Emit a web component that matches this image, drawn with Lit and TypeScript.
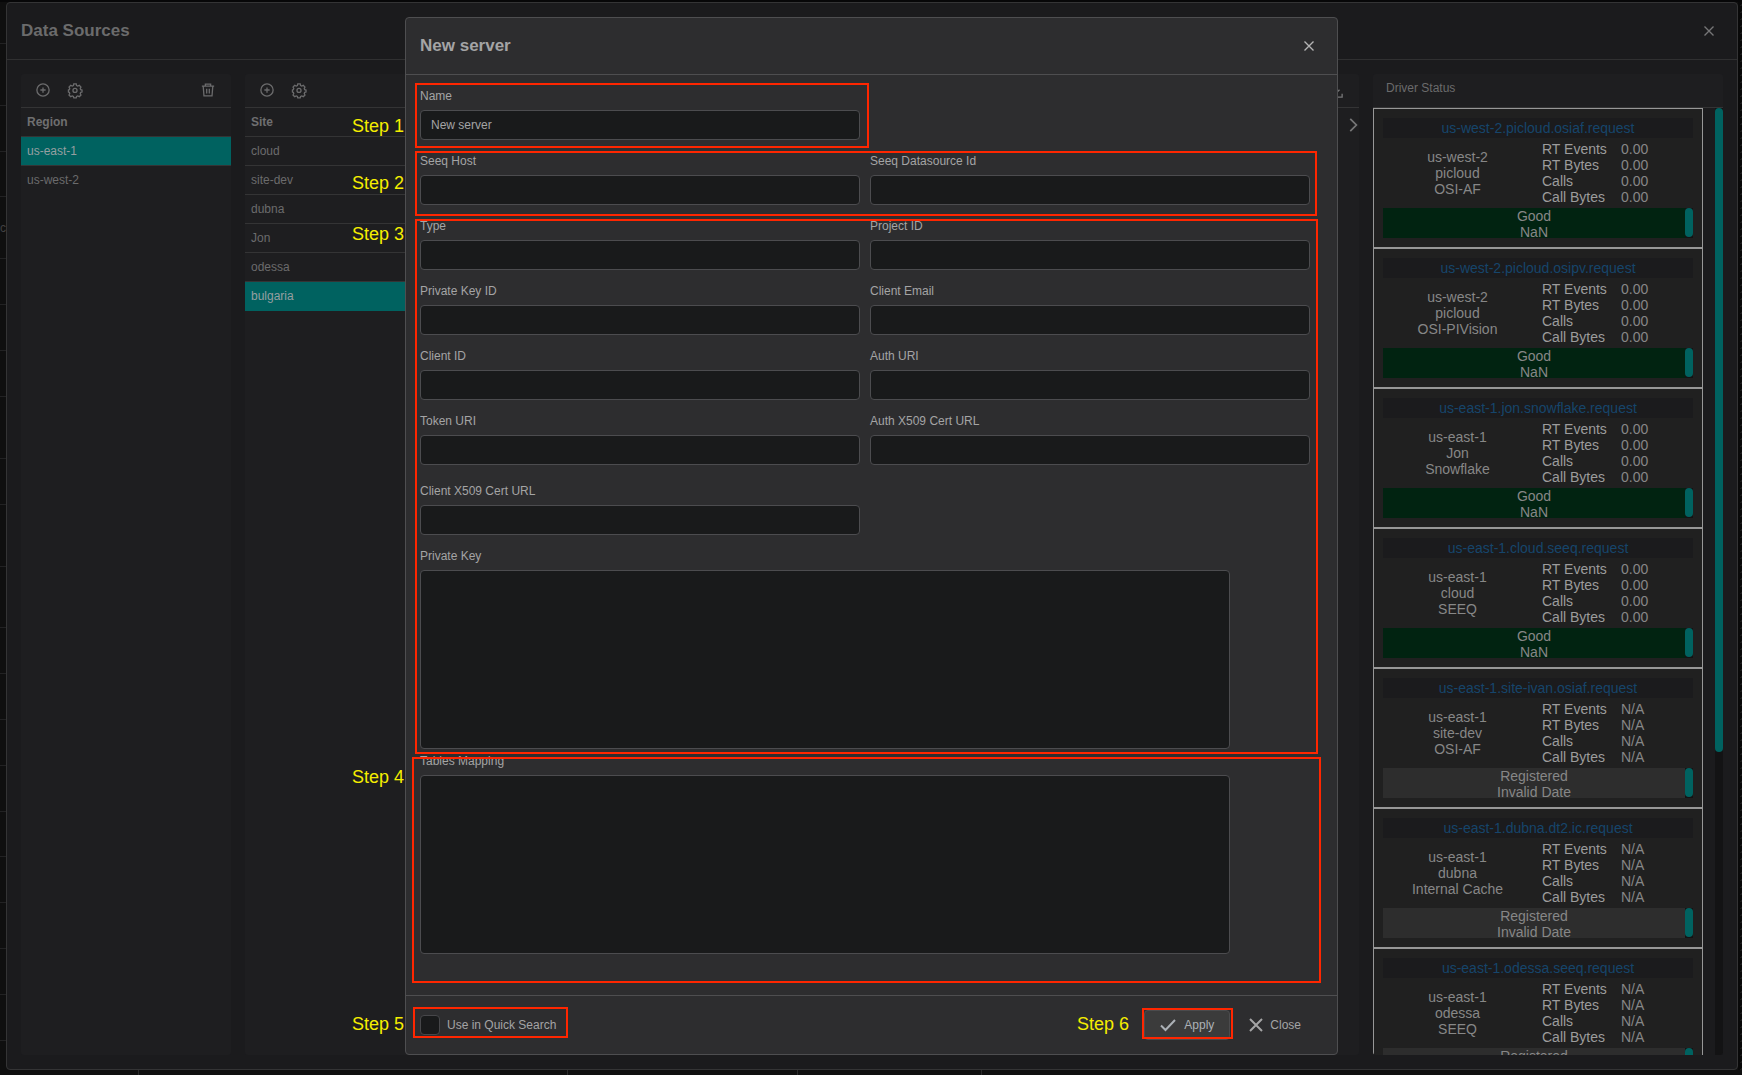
import { LitElement, html, css, svg } from "lit";
import { customElement, property } from "lit/decorators.js";
import { classMap } from "lit/directives/class-map.js";

const icons = {
  plus: svg`<circle cx="8" cy="8" r="7"/><path d="M8 5v6M5 8h6"/>`,
  gear: svg`<path d="M6.600 1h2.800l.4 1.900 1.300.6 1.800-.8 1.900 1.900-.8 1.800.5 1.200 1.500.4v2.300l-1.500.4-.5 1.300.8 1.700-1.900 1.900-1.800-.8-1.300.6-.4 1.600H6.600l-.4-1.600-1.300-.6-1.800.8-1.900-1.900.8-1.700-.5-1.300L.5 10.300V8l1-.4.5-1.200-.8-1.800 1.900-1.900 1.800.8 1.300-.6z"/><circle cx="8" cy="8.500" r="2.300"/>`,
  trash: svg`<path d="M1 3.500h14M5 3.500V1.200h6v2.300M2.500 3.500l.9 11.300h9.200l.9-11.300M6.500 6.500v5.500M9.500 6.500v5.500"/>`,
  close: svg`<path d="M2 2l12 12M14 2L2 14"/>`,
  check: svg`<path d="M1 8.500l4.500 4.500L15 3"/>`,
  chevron: svg`<path d="M6 1l7 7-7 7"/>`,
  download: svg`<path d="M8 1v9M4 6.500l4 4 4-4M1 11v4h14v-4"/>`,
};

@customElement("ui-icon")
export class UiIcon extends LitElement {
  @property() name: keyof typeof icons = "plus";
  static styles = css`
    :host { display: block; width: 14px; height: 14px; }
    .glyph { display: block; width: 100%; height: 100%; overflow: visible; fill: none; stroke: currentColor; stroke-width: var(--stroke, 1.5); }
  `;
  render() {
    return html`<svg class="glyph" viewBox="0 0 16 16" aria-hidden="true">${icons[this.name]}</svg>`;
  }
}

@customElement("list-panel")
export class ListPanel extends LitElement {
  @property() heading = "";
  @property({ attribute: false }) items: string[] = [];
  @property() selected = "";
  static styles = css`
    :host { display: block; background: #1e1e20; border-radius: 3px; min-width: 0; color: #6b6b6c; font-size: 12px; line-height: 14px; }
    .toolbar { display: flex; align-items: center; gap: 18px; height: 31px; padding: 0 16px 2px 15px; border-bottom: 1px solid #343435; }
    .tool { border: 0; background: none; padding: 0; color: inherit; }
    .end { margin-left: auto; }
    .table { width: 100%; border-collapse: separate; border-spacing: 0; }
    .cell { height: 28px; padding: 0 6px; text-align: left; font-weight: 400; border-bottom: 1px solid #343435; }
    .head { font-weight: 700; color: #6f6f70; }
    .row:last-child .cell { border-bottom-color: transparent; }
    .on .cell { background: #006260; color: #959fa0; }
  `;
  render() {
    return html`
      <div class="toolbar">
        <button class="tool" aria-label="Add"><ui-icon name="plus"></ui-icon></button>
        <button class="tool" aria-label="Settings"><ui-icon name="gear"></ui-icon></button>
        <button class="tool end" aria-label="Delete"><ui-icon name="trash"></ui-icon></button>
      </div>
      <table class="table">
        <thead><tr><th class="cell head">${this.heading}</th></tr></thead>
        <tbody>
          ${this.items.map((i) => html`<tr class=${classMap({ row: true, on: i === this.selected })}><td class="cell">${i}</td></tr>`)}
        </tbody>
      </table>`;
  }
}

interface Driver { topic: string; info: string[]; value: string; good: boolean; }

const drivers: Driver[] = [
  { topic: "us-west-2.picloud.osiaf.request", info: ["us-west-2", "picloud", "OSI-AF"], value: "0.00", good: true },
  { topic: "us-west-2.picloud.osipv.request", info: ["us-west-2", "picloud", "OSI-PIVision"], value: "0.00", good: true },
  { topic: "us-east-1.jon.snowflake.request", info: ["us-east-1", "Jon", "Snowflake"], value: "0.00", good: true },
  { topic: "us-east-1.cloud.seeq.request", info: ["us-east-1", "cloud", "SEEQ"], value: "0.00", good: true },
  { topic: "us-east-1.site-ivan.osiaf.request", info: ["us-east-1", "site-dev", "OSI-AF"], value: "N/A", good: false },
  { topic: "us-east-1.dubna.dt2.ic.request", info: ["us-east-1", "dubna", "Internal Cache"], value: "N/A", good: false },
  { topic: "us-east-1.odessa.seeq.request", info: ["us-east-1", "odessa", "SEEQ"], value: "N/A", good: false },
];

@customElement("driver-status")
export class DriverStatus extends LitElement {
  static styles = css`
    :host { display: flex; flex-direction: column; min-height: 0; background: #1e1e20; border-radius: 3px; overflow: hidden; }
    .title { height: 28px; padding: 0 13px 5px; margin: 0; display: flex; align-items: center; font-size: 12px; font-weight: 400; color: #6b6b6c; border-bottom: 1px solid #343435; }
    .scroller { flex: 1; min-height: 0; display: flex; background: #1b1b1d; }
    .cards { flex: 1; min-width: 0; overflow: hidden; margin-right: 12px; }
    .track { width: 8px; background: #131314; }
    .thumb { height: 68%; border-radius: 4px; background: #006260; }
    .card { border: 1px solid #979797; padding: 9px; background: #202020; font-size: 14px; line-height: 16px; color: #878787; }
    .topic { display: block; line-height: 20px; background: #1b1b1d; color: #16456b; text-align: center; text-decoration: none; }
    .body { display: grid; grid-template-columns: 149px 1fr; gap: 10px; align-items: center; padding: 3px 0; }
    .info { text-align: center; }
    .stats { display: grid; grid-template-columns: 67px 1fr; column-gap: 12px; margin: 0; white-space: nowrap; }
    .key { color: #9c9c9c; }
    .val { margin: 0; }
    .state { display: flex; height: 30px; background: #2d2d2d; text-align: center; }
    .good { background: #012311; }
    .text { flex: 1; }
    .mini { width: 8px; height: 29px; border-radius: 4px; background: #006260; }
    .gutter { background: #131314; }
  `;
  render() {
    return html`
      <h2 class="title">Driver Status</h2>
      <div class="scroller">
        <div class="cards">${drivers.map((d) => html`
          <article class="card">
            <a class="topic" href="#">${d.topic}</a>
            <div class="body">
              <div class="info">${d.info.map((t) => html`<div>${t}</div>`)}</div>
              <dl class="stats">
                ${["RT Events", "RT Bytes", "Calls", "Call Bytes"].map((k) => html`<dt class="key">${k}</dt><dd class="val">${d.value}</dd>`)}
              </dl>
            </div>
            <div class=${classMap({ state: true, good: d.good })}>
              <div class="text"><div>${d.good ? "Good" : "Registered"}</div><div>${d.good ? "NaN" : "Invalid Date"}</div></div>
              <div class="gutter"><div class="mini"></div></div>
            </div>
          </article>`)}
        </div>
        <div class="track"><div class="thumb"></div></div>
      </div>`;
  }
}

@customElement("server-dialog")
export class ServerDialog extends LitElement {
  static styles = css`
    :host { display: block; position: relative; box-sizing: border-box; width: 100%; max-width: 933px; border: 1px solid #4e4e50; border-radius: 4px; background: #2d2d2f; color: #a4a4a5; font-size: 12px; line-height: 14px; }
    .header { display: flex; align-items: center; justify-content: space-between; height: 56px; padding: 0 22px 0 14px; border-bottom: 1px solid #4e4e50; }
    .title { margin: 0; font-size: 17px; line-height: 20px; }
    .icon-btn { border: 0; padding: 0; background: none; color: #b4b4b5; }
    .small { width: 12px; height: 12px; --stroke: 1.8; }
    .form { padding: 14px 27px 41px 14px; }
    .fields { display: grid; grid-template-columns: 1fr 1fr; gap: 14px 10px; margin-bottom: 5px; }
    .field { display: flex; flex-direction: column; gap: 7px; min-width: 0; }
    .first { grid-column: 1; }
    .solo { grid-column: 1; padding-top: 5px; }
    .wide { grid-column: 1 / -1; }
    .label { height: 14px; }
    .input, .area { box-sizing: border-box; height: 30px; margin: 0; padding: 0 10px; border: 1px solid #4c4c4f; border-radius: 4px; background: #191a1b; color: #a4a4a5; font: inherit; outline: none; }
    .area { display: block; width: 91%; height: 179px; padding: 8px 10px; resize: none; }
    .footer { display: flex; align-items: center; height: 58px; padding: 0 20px 0 14px; border-top: 1px solid #4e4e50; }
    .option { display: flex; align-items: center; gap: 7px; margin-right: auto; }
    .check { appearance: none; width: 20px; height: 20px; margin: 0; border: 1px solid #47474a; border-radius: 4px; background: #191a1b; }
    .btn { display: flex; align-items: center; gap: 6px; height: 30px; padding: 0 15px; border: 1px solid transparent; border-radius: 4px; background: none; color: #a4a4a5; font: inherit; }
    .apply { gap: 8px; margin-right: 2px; background: #3b3b3b; border-color: #4b4b4d; color: #acb1b6; }
    .big { width: 16px; height: 16px; --stroke: 2; }
    .mark { position: absolute; border: 2px solid #ff2600; pointer-events: none; }
    .m1 { left: 9px; top: 65px; width: 450px; height: 61px; }
    .m2 { left: 9px; right: 20px; top: 133px; height: 61px; }
    .m3 { left: 9px; right: 19px; top: 201px; height: 531px; }
    .m4 { left: 6px; right: 16px; top: 739px; height: 222px; }
    .m5 { left: 7px; bottom: 16px; width: 151px; height: 27px; }
    .m6 { right: 104px; bottom: 15px; width: 87px; height: 27px; }
    .step { position: absolute; left: -54px; font-size: 18px; line-height: 20px; color: #f5ee00; white-space: nowrap; pointer-events: none; }
    .s1 { top: 98px; }
    .s2 { top: 155px; }
    .s3 { top: 206px; }
    .s4 { top: 749px; }
    .s5 { bottom: 20px; }
    .s6 { left: auto; right: 208px; bottom: 20px; }
  `;
  private field(id: string, label: string, cls = "", value = "") {
    return html`<div class="field ${cls}"><label class="label" for=${id}>${label}</label><input class="input" id=${id} type="text" .value=${value} /></div>`;
  }
  render() {
    return html`
      <header class="header">
        <h1 class="title">New server</h1>
        <button class="icon-btn" aria-label="Close dialog"><ui-icon class="small" name="close"></ui-icon></button>
      </header>
      <div class="form">
        <div class="fields">
          ${this.field("name", "Name", "first", "New server")}
          ${this.field("host", "Seeq Host", "first")}
          ${this.field("source", "Seeq Datasource Id")}
          ${this.field("type", "Type")}
          ${this.field("project", "Project ID")}
          ${this.field("key-id", "Private Key ID")}
          ${this.field("email", "Client Email")}
          ${this.field("client", "Client ID")}
          ${this.field("auth", "Auth URI")}
          ${this.field("token", "Token URI")}
          ${this.field("auth-cert", "Auth X509 Cert URL")}
          ${this.field("client-cert", "Client X509 Cert URL", "solo")}
          <div class="field wide"><label class="label" for="key">Private Key</label><textarea class="area" id="key"></textarea></div>
        </div>
        <div class="field"><label class="label" for="tables">Tables Mapping</label><textarea class="area" id="tables"></textarea></div>
      </div>
      <footer class="footer">
        <label class="option"><input class="check" type="checkbox" />Use in Quick Search</label>
        <button class="btn apply"><ui-icon class="big" name="check"></ui-icon>Apply</button>
        <button class="btn"><ui-icon class="big" name="close"></ui-icon>Close</button>
      </footer>
      ${[1, 2, 3, 4, 5, 6].map((n) => html`<div class="mark m${n}"></div><div class="step s${n}">Step ${n}</div>`)}
    `;
  }
}

const gridLines = [42, 62, 46, 45, 62, 46, 46, 46, 62, 46, 62, 61, 46, 46, 46, 46, 45, 46, 46, 46, 46];

@customElement("app-root")
export class AppRoot extends LitElement {
  static styles = css`
    :host { display: block; position: relative; height: 100vh; overflow: hidden; background: #0f0f0f; font-family: "Liberation Sans", Arial, sans-serif; }
    .page { display: grid; grid-template-columns: 6px minmax(0, 1fr) 4px; grid-template-rows: 2px minmax(0, 1fr) 5px; height: 100%; }
    .top { grid-column: 1 / -1; background: #070708; }
    .left { position: relative; overflow: hidden; }
    .tick { box-sizing: border-box; border-bottom: 1px solid #222223; }
    .behind { position: absolute; right: 0; top: 219px; font-size: 12px; line-height: 14px; color: #414142; }
    .right { background: #090909 radial-gradient(circle, #1a1a1a 1px, transparent 1px) 0 0 / 7px 7px; }
    .bottom { grid-column: 1 / -1; display: flex; }
    .seg { box-sizing: border-box; border-right: 1px solid #2a2a2b; }
    .w1 { width: 139px; }
    .w2 { width: 429px; }
    .w3 { width: 230px; }
    .w4 { width: 184px; }
    .sources { display: flex; flex-direction: column; border: 1px solid #343435; border-radius: 4px; background: #1b1b1d; }
    .header { display: flex; align-items: center; justify-content: space-between; height: 56px; padding: 0 22px 0 14px; border-bottom: 1px solid #303031; color: #6b6b6c; }
    .title { margin: 0; font-size: 17px; line-height: 20px; }
    .icon-btn { border: 0; padding: 0; background: none; color: #767677; }
    .small { width: 12px; height: 12px; --stroke: 1.8; }
    .columns { flex: 1; min-height: 0; display: grid; grid-template-columns: 210px 210px minmax(0, 1fr) 350px; gap: 14px; padding: 14px; }
    .servers { background: #1e1e20; border-radius: 3px; }
    .bar { display: flex; justify-content: flex-end; align-items: center; height: 33px; padding-right: 16px; border-bottom: 1px solid #343435; }
    .next { display: flex; justify-content: flex-end; padding: 10px 0; --stroke: 2; }
    .overlay { position: absolute; inset: 0; display: flex; justify-content: center; align-items: flex-start; padding: 17px 14px 0 15px; }
  `;
  render() {
    return html`
      <div class="page">
        <div class="top"></div>
        <div class="left">
          ${gridLines.map((h) => html`<div class="tick" style="height:${h}px"></div>`)}
          <span class="behind">ic</span>
        </div>
        <main class="sources">
          <header class="header">
            <h1 class="title">Data Sources</h1>
            <button class="icon-btn" aria-label="Close"><ui-icon class="small" name="close"></ui-icon></button>
          </header>
          <div class="columns">
            <list-panel heading="Region" selected="us-east-1" .items=${["us-east-1", "us-west-2"]}></list-panel>
            <list-panel heading="Site" selected="bulgaria" .items=${["cloud", "site-dev", "dubna", "Jon", "odessa", "bulgaria"]}></list-panel>
            <section class="servers">
              <div class="bar"><button class="icon-btn" aria-label="Import"><ui-icon name="download"></ui-icon></button></div>
              <div class="next"><button class="icon-btn" aria-label="Next"><ui-icon name="chevron"></ui-icon></button></div>
            </section>
            <driver-status></driver-status>
          </div>
        </main>
        <div class="right"></div>
        <div class="bottom"><div class="seg w1"></div><div class="seg w2"></div><div class="seg w3"></div><div class="seg w4"></div></div>
      </div>
      <div class="overlay"><server-dialog></server-dialog></div>
    `;
  }
}
